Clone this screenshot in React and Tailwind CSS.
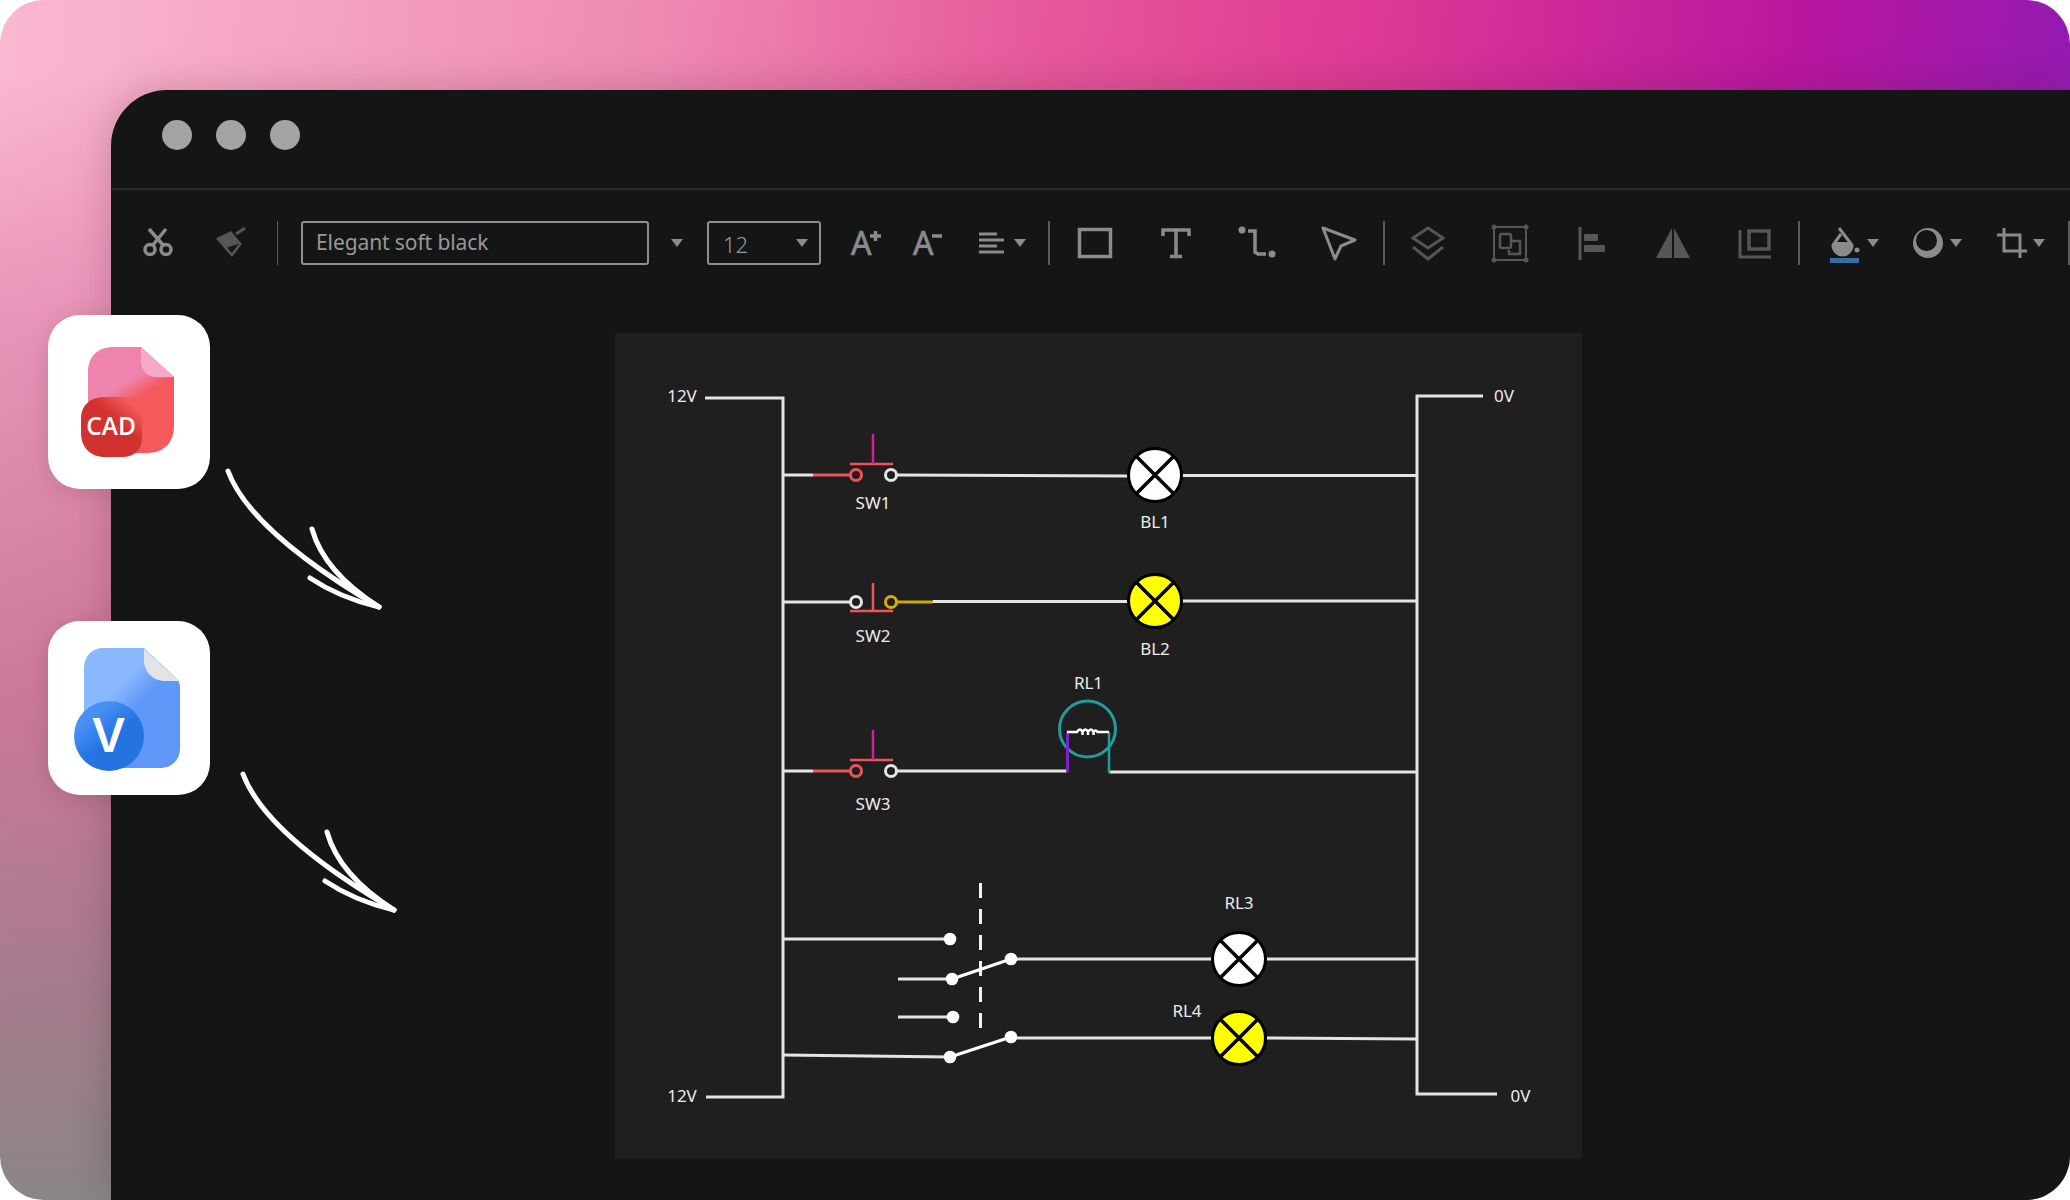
// toolbar svgs use page coordinates in their viewBox, so they can be compared to the screenshot directly
const GREY = "#8b8b8b";
const DIM = "#565656";

function Caret({ className = "" }) {
    return (
        <svg viewBox="0 0 12 8" className={`w-[12px] h-[8px] shrink-0 ${className}`}>
            <path d="M0 0H12L6 8Z" fill={GREY} />
        </svg>
    );
}

function Sep({ className = "" }) {
    return <div className={`h-[44px] shrink-0 bg-[#5c5c5c] ${className}`}></div>;
}

// one toolbar icon, x0..x1 in page coordinates, always y 220..266
function Tool({ x0, x1, className = "", children }) {
    return (
        <svg
            viewBox={`${x0} 220 ${x1 - x0} 46`}
            width={x1 - x0}
            height={46}
            className={`shrink-0 ${className}`}
            fill="none"
        >
            {children}
        </svg>
    );
}

function Toolbar() {
    return (
        <div className="flex items-center h-[46px] mt-[30px] font-['Noto_Sans',sans-serif]">
            <Tool x0={140} x1={175} className="ml-[29px]">
                <g stroke={GREY} strokeWidth="3.5">
                    <circle cx="150" cy="249.5" r="5" />
                    <circle cx="166" cy="249.5" r="5" />
                    <path d="M153 245 L166 229 M163 245 L149 229" />
                </g>
            </Tool>
            <Tool x0={215} x1={250} className="ml-[40px]">
                <path d="M217 238 L232 255 L241 243" stroke={DIM} strokeWidth="2.5" />
                <path d="M217 238 L231 231 L241 243 L226 248 Z" fill={DIM} />
                <path d="M236 234 L245 228" stroke={DIM} strokeWidth="3" />
            </Tool>
            <Sep className="ml-[27px] w-px" />
            <div className="ml-[23px] w-[348px] h-[44px] shrink-0 flex items-center pl-[13px] border-2 border-[#8f8f8f] rounded-[3px] text-[21px] tracking-[-0.1px] text-[#989898]">
                Elegant soft black
            </div>
            <Caret className="ml-[22px]" />
            <div className="ml-[24px] w-[114px] h-[44px] shrink-0 flex items-center justify-between pl-[14px] pr-[11px] border-2 border-[#8f8f8f] rounded-[3px] text-[22px] font-light text-[#9a9a9a]">
                <span className="pt-[3px]">12</span>
                <Caret />
            </div>
            <Tool x0={850} x1={884} className="ml-[29px]">
                <text x="851" y="255" fontSize="32" fill={GREY} stroke={GREY} strokeWidth="0.7" fontFamily="Noto Sans, sans-serif">A</text>
                <path d="M870 236 H881 M875.5 231 V241" stroke={GREY} strokeWidth="3.5" />
            </Tool>
            <Tool x0={910} x1={944} className="ml-[26px]">
                <text x="913" y="255" fontSize="32" fill={GREY} stroke={GREY} strokeWidth="0.7" fontFamily="Noto Sans, sans-serif">A</text>
                <path d="M932 236 H942" stroke={GREY} strokeWidth="3.5" />
            </Tool>
            <Tool x0={978} x1={1006} className="ml-[34px]">
                <path d="M979 234 H997 M979 240 H1004 M979 246 H997 M979 252 H1004" stroke={GREY} strokeWidth="3" />
            </Tool>
            <Caret className="ml-[8px]" />
            <Sep className="ml-[22px] w-[2px]" />
            <Tool x0={1076} x1={1114} className="ml-[26px]">
                <rect x="1079.5" y="229.5" width="31" height="27" stroke={GREY} strokeWidth="3.5" />
            </Tool>
            <Tool x0={1159} x1={1193} className="ml-[45px]">
                <path d="M1163 236 V230 H1189 V236 M1176 230 V256 M1170 256.5 H1182" stroke={GREY} strokeWidth="3.5" />
            </Tool>
            <Tool x0={1236} x1={1278} className="ml-[43px]">
                <circle cx="1242" cy="230" r="3.5" fill={GREY} />
                <circle cx="1272" cy="254" r="3.5" fill={GREY} />
                <path d="M1248 231 H1255 V252 L1258 254 H1266" stroke={GREY} strokeWidth="3.5" />
            </Tool>
            <Tool x0={1320} x1={1358} className="ml-[42px]">
                <path d="M1323 228 L1355 240 L1341 246 L1335 259 Z" stroke={GREY} strokeWidth="3" strokeLinejoin="round" />
            </Tool>
            <Sep className="ml-[25px] w-[2px]" />
            <Tool x0={1410} x1={1447} className="ml-[25px]">
                <path d="M1428 228 L1443 238 L1428 248 L1413 238 Z M1413 247 L1428 259 L1443 247" stroke={DIM} strokeWidth="3" />
            </Tool>
            <Tool x0={1491} x1={1529} className="ml-[44px]">
                <g stroke={DIM}>
                    <rect x="1494" y="227" width="32" height="33" strokeWidth="2" />
                    <rect x="1500" y="234" width="11" height="14" rx="2" strokeWidth="2.5" />
                    <path d="M1512 241 H1520 V254 H1509 V250" strokeWidth="2.5" />
                </g>
                <g fill={DIM}>
                    <circle cx="1494" cy="227" r="2.5" />
                    <circle cx="1526" cy="227" r="2.5" />
                    <circle cx="1494" cy="260" r="2.5" />
                    <circle cx="1526" cy="260" r="2.5" />
                </g>
            </Tool>
            <Tool x0={1577} x1={1607} className="ml-[48px]">
                <path d="M1580 227 V260" stroke={DIM} strokeWidth="3" />
                <rect x="1584" y="234" width="14" height="7" rx="1" fill={DIM} />
                <rect x="1584" y="245" width="21" height="7" rx="1" fill={DIM} />
            </Tool>
            <Tool x0={1654} x1={1692} className="ml-[47px]">
                <path d="M1656 258 L1672 228 V258 Z M1674 228 L1690 258 H1674 Z" fill={DIM} />
            </Tool>
            <Tool x0={1737} x1={1772} className="ml-[45px]">
                <path d="M1740 230 V257 H1771" stroke={DIM} strokeWidth="3" />
                <rect x="1749" y="231" width="20" height="18" stroke={DIM} strokeWidth="3.5" />
            </Tool>
            <Sep className="ml-[26px] w-[2px]" />
            <Tool x0={1829} x1={1860} className="ml-[29px]">
                <path d="M1839 228 L1852 245 A9.5 10 0 0 1 1833 245 L1841 234" stroke={GREY} strokeWidth="3" />
                <path d="M1833 242 H1852 A9.5 13 0 0 1 1833 242 Z" fill={GREY} />
                <circle cx="1857" cy="250" r="2.5" fill={GREY} />
                <rect x="1830" y="258" width="29" height="5" fill="#3b6ca8" />
            </Tool>
            <Caret className="ml-[7px]" />
            <Tool x0={1911} x1={1944} className="ml-[32px]">
                <circle cx="1928" cy="243" r="15" fill={GREY} />
                <circle cx="1926.5" cy="240.5" r="10.5" fill="#141515" />
            </Tool>
            <Caret className="ml-[6px]" />
            <Tool x0={1995} x1={2028} className="ml-[33px]">
                <path d="M2004 228 V251 H2027 M1997 235 H2020 V258" stroke={GREY} strokeWidth="3" />
            </Tool>
            <Caret className="ml-[5px]" />
            <Sep className="ml-[23px] w-[2px]" />
        </div>
    );
}

function Lamp({ x, y, fill }) {
    return (
        <g>
            <circle cx={x} cy={y} r="26.5" fill={fill} stroke="#000" strokeWidth="3" />
            <path d={`M${x - 18} ${y - 18} L${x + 18} ${y + 18} M${x + 18} ${y - 18} L${x - 18} ${y + 18}`} stroke="#000" strokeWidth="3.5" />
        </g>
    );
}

function Label({ x, y, children }) {
    return (
        <text x={x} y={y + 6} textAnchor="middle" fontSize="17" fill="#ececec" fontFamily="Noto Sans, sans-serif">
            {children}
        </text>
    );
}

function Terminal({ x, y, color = "#e4e4e4" }) {
    return <circle cx={x} cy={y} r="5.5" fill="none" stroke={color} strokeWidth="3" />;
}

function Dot({ x, y }) {
    return <circle cx={x} cy={y} r="6.3" fill="#fff" />;
}

// the ladder diagram, coordinates are page pixels
function Diagram() {
    const RED = "#f0525a";
    return (
        <svg viewBox="615 333 967 826" className="block w-full h-full" fill="none">
            <g stroke="#e4e4e4" strokeWidth="3">
                <path d="M705 398 H783 V1097 H706" />
                <path d="M1483 396 H1417 V1094 H1497" />
                <path d="M783 475 H813 M897 475 L1130 476 M1180 475.5 H1417" />
                <path d="M783 602 H850 M933 601.5 H1130 M1180 601 H1417" />
                <path d="M783 771 H813 M897 771 H1067 M1109 772 H1417" />
                <path d="M783 939 H950 M898 979 H952 M898 1017 H953 M783 1055 L950 1057" />
                <path d="M1011 959 H1214 M1264 959 H1417 M1011 1038 H1214 M1264 1038 L1417 1039" />
            </g>

            <path d="M813 475 H850" stroke={RED} strokeWidth="3" />
            <path d="M850 464 H893" stroke={RED} strokeWidth="2.5" />
            <path d="M873 434 V464" stroke="#d4209a" strokeWidth="2.5" />
            <Terminal x={856} y={475} color={RED} />
            <Terminal x={891} y={475} />

            <path d="M850 611 H893 M873 583 V611" stroke={RED} strokeWidth="2.5" />
            <path d="M897 602 H933" stroke="#c9a80c" strokeWidth="3" />
            <Terminal x={856} y={602} />
            <Terminal x={891} y={602} color="#d4ac0d" />

            <path d="M813 771 H850" stroke={RED} strokeWidth="3" />
            <path d="M850 760 H893" stroke={RED} strokeWidth="2.5" />
            <path d="M873 730 V760" stroke="#d4209a" strokeWidth="2.5" />
            <Terminal x={856} y={771} color={RED} />
            <Terminal x={891} y={771} />

            <circle cx="1087.5" cy="729" r="28" stroke="#1f9e9a" strokeWidth="3" />
            <path d="M1067.5 732 V772" stroke="#7b22c9" strokeWidth="3" />
            <path d="M1109 732 V773" stroke="#1f9e9a" strokeWidth="2.5" />
            <path
                d="M1067 732 H1077 q3 -5 5.5 0 v3 m0 -3 q3 -5 5.5 0 v3 m0 -3 q3 -5 5.5 0 v3 m0 -3 q2 -3 4 0 H1109"
                stroke="#fff"
                strokeWidth="2.5"
            />

            <Lamp x={1155} y={475} fill="#fff" />
            <Lamp x={1155} y={601} fill="#ffff00" />
            <Lamp x={1239} y={959} fill="#fff" />
            <Lamp x={1239} y={1038} fill="#ffff00" />

            <path d="M980.5 883 V1029" stroke="#f2f2f2" strokeWidth="3" strokeDasharray="15 11" />
            <path d="M952 979 L1011 959 M950 1057 L1011 1037" stroke="#fff" strokeWidth="3" />
            <Dot x={950} y={939} />
            <Dot x={952} y={979} />
            <Dot x={953} y={1017} />
            <Dot x={950} y={1057} />
            <Dot x={1011} y={959} />
            <Dot x={1011} y={1037} />

            <Label x={682} y={396}>12V</Label>
            <Label x={682} y={1096}>12V</Label>
            <Label x={1504} y={396}>0V</Label>
            <Label x={1520.5} y={1096}>0V</Label>
            <Label x={873} y={503}>SW1</Label>
            <Label x={873} y={636}>SW2</Label>
            <Label x={873} y={804}>SW3</Label>
            <Label x={1155} y={522}>BL1</Label>
            <Label x={1155} y={649}>BL2</Label>
            <Label x={1088.5} y={683}>RL1</Label>
            <Label x={1239} y={903}>RL3</Label>
            <Label x={1187} y={1011}>RL4</Label>
        </svg>
    );
}

function CadIcon() {
    return (
        <svg viewBox="48 315 162 174" className="w-full h-full">
            <defs>
                <linearGradient id="cadDoc" x1="0.35" y1="0.1" x2="0.6" y2="0.6">
                    <stop offset="0.45" stopColor="#ee83ad" />
                    <stop offset="0.8" stopColor="#f4595c" />
                </linearGradient>
                <linearGradient id="cadBadge" x1="0.9" y1="0" x2="0.3" y2="0.7">
                    <stop offset="0.15" stopColor="#f4595c" />
                    <stop offset="0.55" stopColor="#d2322f" />
                </linearGradient>
            </defs>
            <path d="M114 347 H141 L174 377 V425 C174 445 162 453 146 453 H110 L88 420 V372 C88 356 98 347 114 347 Z" fill="url(#cadDoc)" />
            <path d="M141 347 L174 377 H156 C147 377 141 370 141 362 Z" fill="#f5a8c8" />
            <path d="M104 397 H124 C136 397 142 406 142 418 V438 C142 450 134 457 122 457 H105 C90 457 81 447 81 433 V418 C81 406 90 397 104 397 Z" fill="url(#cadBadge)" />
            <text x="111" y="435" textAnchor="middle" fontSize="24.5" fontWeight="600" fill="#fff" fontFamily="Open Sans, sans-serif">CAD</text>
        </svg>
    );
}

function VisioIcon() {
    return (
        <svg viewBox="48 621 162 174" className="w-full h-full">
            <defs>
                <linearGradient id="vDoc" x1="0.2" y1="0.2" x2="0.6" y2="0.7">
                    <stop offset="0.3" stopColor="#8ab8ff" />
                    <stop offset="0.7" stopColor="#5f97f8" />
                </linearGradient>
                <linearGradient id="vBadge" x1="0.15" y1="0.1" x2="0.65" y2="0.7">
                    <stop offset="0.2" stopColor="#4a90f3" />
                    <stop offset="0.75" stopColor="#2374e1" />
                </linearGradient>
            </defs>
            <path d="M104 648 H144 L178 680 C179 682 180 684 180 688 V748 C180 760 172 768 160 768 H104 C92 768 84 760 84 748 V668 C84 656 92 648 104 648 Z" fill="url(#vDoc)" />
            <path d="M144 649 L179 681 H165 C153 681 144 672 144 660 Z" fill="#e3e4e6" />
            <circle cx="109" cy="736" r="35" fill="url(#vBadge)" />
            <text x="108.5" y="752" textAnchor="middle" fontSize="47" fontWeight="600" fill="#fff" fontFamily="Inter, sans-serif">V</text>
        </svg>
    );
}

function Arrow({ className }) {
    return (
        <svg viewBox="220 460 170 160" className={`absolute w-[170px] h-[160px] ${className}`} fill="none">
            <g stroke="#fff" strokeWidth="5" strokeLinecap="round">
                <path d="M228 471 Q250 531 379 607" />
                <path d="M312 529 Q324 572 379 607" />
                <path d="M310 578 Q340 598 379 607" />
            </g>
        </svg>
    );
}

export default function App() {
    return (
        <div className="relative w-[2070px] h-[1200px] overflow-hidden bg-white">
            <div className="relative w-full h-full overflow-hidden rounded-[44px] bg-[linear-gradient(180deg,transparent_6%,rgba(220,120,165,0.5)_25%,rgba(180,90,125,0.65)_58%,rgba(150,115,130,0.85)_83%,#8a8586_100%),linear-gradient(96deg,#fab8d1_0%,#ef8ab2_30%,#e6579a_48%,#de3a94_62%,#b9169f_82%,#8a1bb5_98%)]">
                <div className="ml-[111px] mt-[90px] absolute inset-0 rounded-tl-[56px] bg-[#141515] shadow-[0_0_40px_rgba(0,0,0,0.18)] flex flex-col">
                    <div className="h-[100px] shrink-0 flex gap-[24px] pl-[51px] pt-[30px] border-b-2 border-[#2a2b2b]">
                        <div className="w-[30px] h-[30px] rounded-full bg-[#a3a3a3]"></div>
                        <div className="w-[30px] h-[30px] rounded-full bg-[#a3a3a3]"></div>
                        <div className="w-[30px] h-[30px] rounded-full bg-[#a3a3a3]"></div>
                    </div>
                    <Toolbar />
                    <div className="ml-[504px] mt-[67px] w-[967px] h-[826px] shrink-0 bg-[#1f1f1f]">
                        <Diagram />
                    </div>
                </div>

                <div className="absolute left-[48px] top-[315px] w-[162px] h-[174px] rounded-[32px] bg-white shadow-[0_4px_24px_rgba(0,0,0,0.12)]">
                    <CadIcon />
                </div>
                <div className="absolute left-[48px] top-[621px] w-[162px] h-[174px] rounded-[32px] bg-white shadow-[0_4px_24px_rgba(0,0,0,0.12)]">
                    <VisioIcon />
                </div>
                <Arrow className="left-[220px] top-[460px]" />
                <Arrow className="left-[235px] top-[763px]" />
            </div>
        </div>
    );
}
